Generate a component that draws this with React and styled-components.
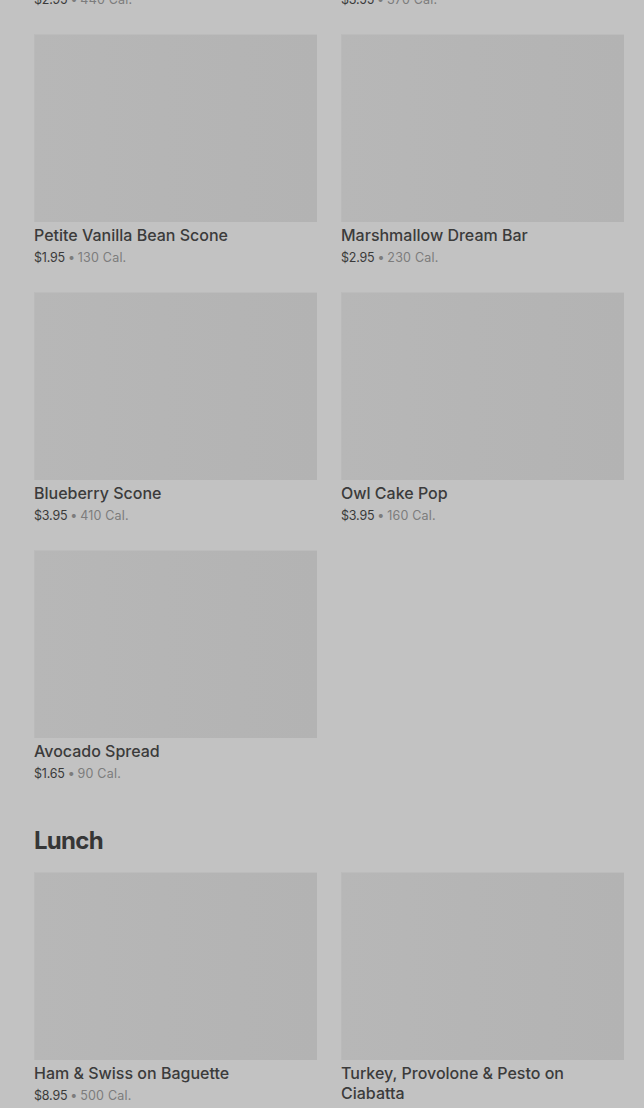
import React from 'react';
import styled, { createGlobalStyle } from 'styled-components';

const GlobalStyle = createGlobalStyle`
  html, body {
    margin: 0;
    padding: 0;
    background: #c2c2c2;
    font-family: "Inter", "Noto Sans", sans-serif;
    -webkit-font-smoothing: antialiased;
  }
`;

const Page = styled.div`
  background: #c2c2c2;
  padding: 0 20px 0 34px;
  height: 1108px;
  overflow: hidden;
`;

// the list is scrolled: the first row sits mostly above the window
const Scroller = styled.div`
  margin-top: -224px;
`;

const Section = styled.section`
  & + & {
    margin-top: 41px;
  }
`;

const Heading = styled.h2`
  margin: 0 0 15px;
  font-size: 24px;
  line-height: 32px;
  font-weight: 700;
  color: #363636;
  letter-spacing: -0.7px;
`;

const Grid = styled.div`
  display: grid;
  grid-template-columns: 283px 283px;
  column-gap: 24px;
  row-gap: 24px;
`;

const Card = styled.div`
  display: flex;
  flex-direction: column;
`;

const Thumb = styled.div`
  height: 188px;
  background: linear-gradient(90deg, #b7b7b7 0%, #b5b5b5 45%, #b3b3b3 100%);
  border-top: 1px solid #bcbcbc;
  border-left: 1px solid #bababa;
  box-sizing: border-box;
`;

const Name = styled.div`
  margin-top: 3px;
  font-size: 16px;
  line-height: 20px;
  font-weight: 500;
  color: #3b3b3b;
`;

const Meta = styled.div`
  margin-top: 3px;
  font-size: 12.5px;
  line-height: 20px;
  color: #3a3a3a;
  letter-spacing: -0.2px;
`;

const Cal = styled.span`
  color: #7c7c7c;
  letter-spacing: 0.2px;
`;

const Dot = styled.span`
  color: #7c7c7c;
  margin: 0 3px;
`;

const sections = [
  {
    title: null,
    items: [
      { name: 'Classic Coffee Cake', price: '$2.95', cal: '440' },
      { name: 'Double Chocolate Brownie', price: '$3.55', cal: '370' },
      { name: 'Petite Vanilla Bean Scone', price: '$1.95', cal: '130' },
      { name: 'Marshmallow Dream Bar', price: '$2.95', cal: '230' },
      { name: 'Blueberry Scone', price: '$3.95', cal: '410' },
      { name: 'Owl Cake Pop', price: '$3.95', cal: '160' },
      { name: 'Avocado Spread', price: '$1.65', cal: '90' },
    ],
  },
  {
    title: 'Lunch',
    items: [
      { name: 'Ham & Swiss on Baguette', price: '$8.95', cal: '500' },
      { name: 'Turkey, Provolone & Pesto on Ciabatta', price: '$7.95', cal: '520' },
    ],
  },
];

function Item({ item }) {
  return (
    <Card>
      <Thumb />
      <Name>{item.name}</Name>
      <Meta>
        {item.price}
        <Dot>•</Dot>
        <Cal>{item.cal} Cal.</Cal>
      </Meta>
    </Card>
  );
}

export default function App() {
  return (
    <>
      <GlobalStyle />
      <Page>
        <Scroller>
          {sections.map((s, i) => (
            <Section key={i}>
              {s.title && <Heading>{s.title}</Heading>}
              <Grid>
                {s.items.map((it) => (
                  <Item key={it.name} item={it} />
                ))}
              </Grid>
            </Section>
          ))}
        </Scroller>
      </Page>
    </>
  );
}
